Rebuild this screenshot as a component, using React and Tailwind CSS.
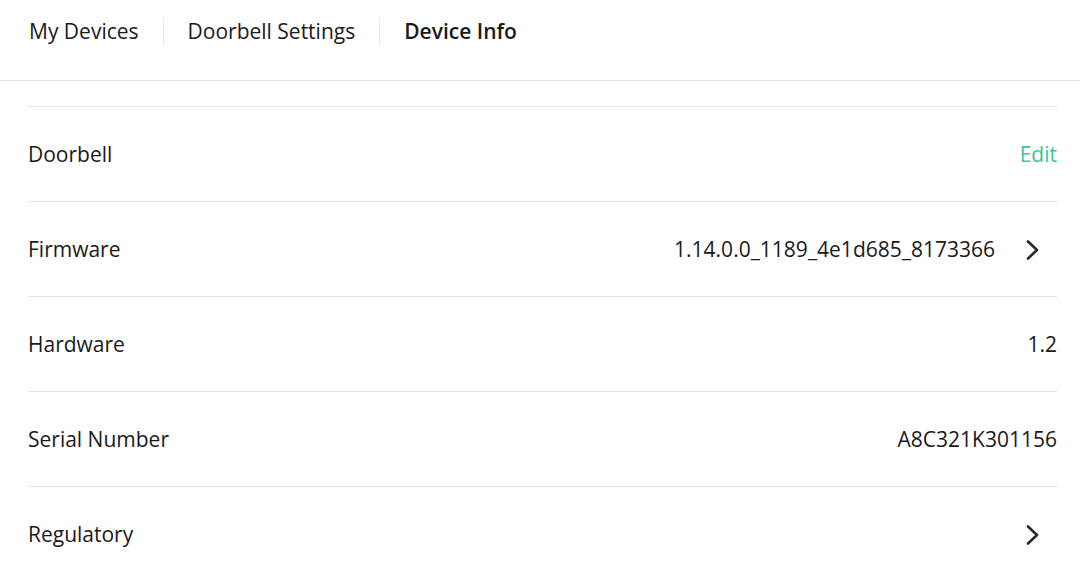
import React from 'react';

function Chevron() {
  return (
    <svg width="14" height="20" viewBox="0 0 14 20" fill="none" className="text-[#222a30]">
      <path d="M3 1.5l9 8.5-9 8.5" stroke="currentColor" strokeWidth="2.6" strokeLinecap="round" strokeLinejoin="round" />
    </svg>
  );
}

function Row({ label, value, edit, chevron }) {
  return (
    <div className="flex items-center justify-between h-[95px] pt-[2px] border-t border-[#e3e3e3]">
      <span>{label}</span>
      <div className="flex items-center">
        {value && <span>{value}</span>}
        {edit && <span className="text-[#44c495]">Edit</span>}
        {chevron && (
          <span className="ml-[30px] mr-[18px] flex items-center">
            <Chevron />
          </span>
        )}
      </div>
    </div>
  );
}

export default function App() {
  const rows = [
    { label: 'Doorbell', edit: true },
    { label: 'Firmware', value: '1.14.0.0_1189_4e1d685_8173366', chevron: true },
    { label: 'Hardware', value: '1.2' },
    { label: 'Serial Number', value: 'A8C321K301156' },
    { label: 'Regulatory', chevron: true },
  ];

  return (
    <div className="w-[1080px] h-[575px] overflow-hidden bg-white text-[21px] text-[#1a1a1a]" style={{ fontFamily: '"Open Sans", "Noto Sans", sans-serif' }}>
      {/* Tabs */}
      <div className="h-[81px] border-b border-[#e3e3e3] flex items-start pt-[15px] pl-[29px]">
        <span className="leading-[32px]">My Devices</span>
        <span className="mx-6 mt-[3px] h-[26px] w-px bg-[#e6e6e6]" />
        <span className="leading-[32px]">Doorbell Settings</span>
        <span className="mx-6 mt-[3px] h-[26px] w-px bg-[#e6e6e6]" />
        <span className="leading-[32px] font-semibold">Device Info</span>
      </div>

      <div className="pl-[28px] pr-[23px]">
        <div className="h-[25px]" />
        {rows.map((r) => (
          <Row key={r.label} {...r} />
        ))}
      </div>
    </div>
  );
}
